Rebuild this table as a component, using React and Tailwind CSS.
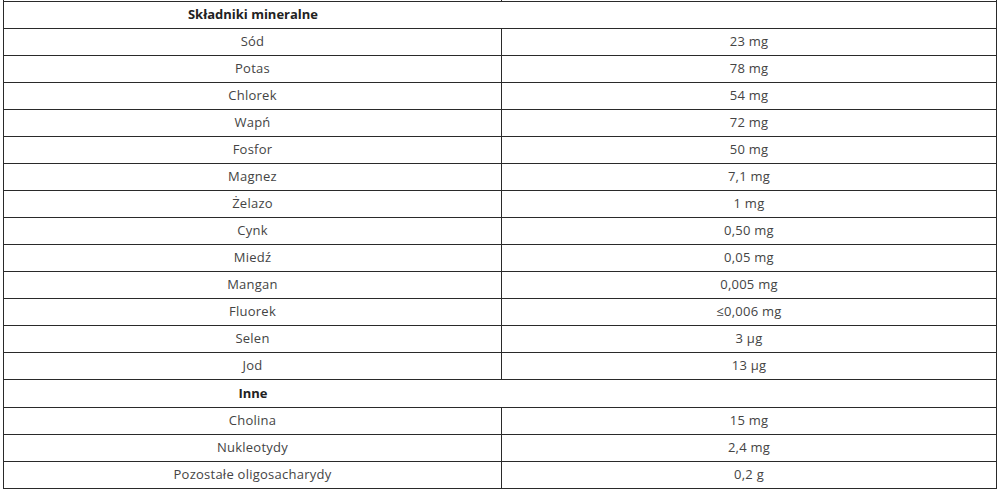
import React from "react";

const minerals = [
  ["Sód", "23 mg"],
  ["Potas", "78 mg"],
  ["Chlorek", "54 mg"],
  ["Wapń", "72 mg"],
  ["Fosfor", "50 mg"],
  ["Magnez", "7,1 mg"],
  ["Żelazo", "1 mg"],
  ["Cynk", "0,50 mg"],
  ["Miedź", "0,05 mg"],
  ["Mangan", "0,005 mg"],
  ["Fluorek", "≤0,006 mg"],
  ["Selen", "3 µg"],
  ["Jod", "13 µg"],
];

const other = [
  ["Cholina", "15 mg"],
  ["Nukleotydy", "2,4 mg"],
  ["Pozostałe oligosacharydy", "0,2 g"],
];

function Row({ name, value }) {
  return (
    <div className="flex h-[27px] border-b border-[#2a2a2a]">
      <div className="w-[499px] flex items-center justify-center border-l border-r border-[#2a2a2a] text-[#444] tracking-[0.25px]">
        {name}
      </div>
      <div className="w-[495px] flex items-center justify-center border-r border-[#2a2a2a] text-[#444] tracking-[0.25px]">
        {value}
      </div>
    </div>
  );
}

function Header({ title, top }) {
  return (
    <div
      className={
        "flex h-[28px] border-b border-l border-r border-[#2a2a2a] " +
        (top ? "border-t" : "")
      }
    >
      <div className="w-[498px] flex items-center justify-center font-bold text-[#222]">
        {title}
      </div>
    </div>
  );
}

export default function App() {
  return (
    <div
      className="bg-white w-[999px] h-[491px] pl-[3px] text-[13px] overflow-hidden"
      style={{ fontFamily: '"Open Sans", "Liberation Sans", sans-serif' }}
    >
      <div className="w-[994px]">
        <div className="flex h-[1px]">
          <div className="w-[499px] border-l border-r border-[#2a2a2a]" />
          <div className="w-[495px] border-r border-[#2a2a2a]" />
        </div>
        <Header title="Składniki mineralne" top />
        {minerals.map(([n, v]) => (
          <Row key={n} name={n} value={v} />
        ))}
        <Header title="Inne" />
        {other.map(([n, v]) => (
          <Row key={n} name={n} value={v} />
        ))}
      </div>
    </div>
  );
}
